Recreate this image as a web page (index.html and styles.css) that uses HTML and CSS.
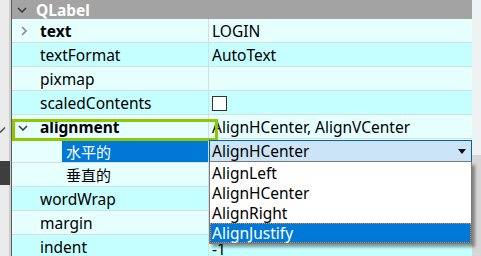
FILE: index.html
```html
<!DOCTYPE html>
<html lang="zh">
<head>
    <meta charset="UTF-8">
    <title>Property Editor - QLabel</title>
    <link rel="stylesheet" href="styles.css">
</head>
<body>
    <div class="screen">
        <div class="side">
            <svg class="side-mark" width="6" height="8" viewBox="0 0 6 8"><path d="M0 7.5 L5 2.5" stroke="#555" stroke-width="1.6" fill="none"/></svg>
            <div class="side-block"></div>
        </div>

        <div class="tree">
            <div class="group">
                <svg class="chev" width="10" height="6" viewBox="0 0 10 6"><path d="M1 1 L5 5 L9 1" stroke="#3c3c3c" stroke-width="1.6" fill="none"/></svg>
                <span>QLabel</span>
            </div>

            <div class="row light">
                <div class="name top">
                    <svg class="chev-r" width="6" height="10" viewBox="0 0 6 10"><path d="M1 1 L5 5 L1 9" stroke="#8a8a8a" stroke-width="1.6" fill="none"/></svg>
                    <b>text</b>
                </div>
                <div class="value">LOGIN</div>
            </div>
            <div class="row dark">
                <div class="name top">textFormat</div>
                <div class="value">AutoText</div>
            </div>
            <div class="row light">
                <div class="name top">pixmap</div>
                <div class="value"></div>
            </div>
            <div class="row dark">
                <div class="name top">scaledContents</div>
                <div class="value"><span class="check"></span></div>
            </div>
            <div class="row light">
                <div class="name top">
                    <svg class="chev-d" width="10" height="6" viewBox="0 0 10 6"><path d="M1 1 L5 5 L9 1" stroke="#3c3c3c" stroke-width="1.6" fill="none"/></svg>
                    <b>alignment</b>
                </div>
                <div class="value">AlignHCenter, AlignVCenter</div>
            </div>
            <div class="row light">
                <div class="name child"><span class="selected">水平的</span></div>
                <div class="value"></div>
            </div>
            <div class="row light">
                <div class="name child"><span class="plain">垂直的</span></div>
                <div class="value"></div>
            </div>
            <div class="row dark">
                <div class="name top">wordWrap</div>
                <div class="value"></div>
            </div>
            <div class="row light">
                <div class="name top">margin</div>
                <div class="value"></div>
            </div>
            <div class="row dark">
                <div class="name top">indent</div>
                <div class="value low">-1</div>
            </div>

            <!-- current item outline -->
            <div class="focus-ring"></div>

            <!-- open combo editor -->
            <div class="combo">
                <span>AlignHCenter</span>
                <svg width="8" height="5" viewBox="0 0 8 5"><path d="M0 0 H8 L4 5 Z" fill="#111"/></svg>
            </div>
            <ul class="popup">
                <li>AlignLeft</li>
                <li>AlignHCenter</li>
                <li>AlignRight</li>
                <li class="current">AlignJustify</li>
            </ul>
        </div>

        <div class="scroll">
            <div class="scroll-top"></div>
            <div class="scroll-rest"></div>
        </div>
    </div>
</body>
</html>
```

FILE: styles.css
```css
body {
    margin: 0;
    background-color: #f0f0f0;
    font-family: "Noto Sans", "Noto Sans CJK SC", sans-serif;
    font-size: 15.5px;
    color: #000;
}

.screen {
    display: flex;
    width: 481px;
    height: 256px;
    overflow: hidden;
}

/* left neighbour panel edge */
.side {
    width: 11px;
    flex-shrink: 0;
    display: flex;
    flex-direction: column;
    background: linear-gradient(to right, #ebebeb 0, #ebebeb 9px, #cdcdcd 9px);
    border-right: 1px solid #5e5e5e;
}

.side-mark {
    display: block;
    margin-top: 125px;
}

.side-block {
    width: 10px;
    height: 24px;
    margin-top: 28px;
    background-color: #3e3e3e;
}

/* property tree */
.tree {
    position: relative;
    width: 460px;
    flex-shrink: 0;
    background-color: #e6ffff;
}

.group {
    height: 19px;
    display: flex;
    align-items: center;
    background-color: #a3a3a3;
    color: #fff;
    font-weight: bold;
}

.group .chev {
    margin-left: 5px;
    margin-right: 9px;
}

.row {
    display: flex;
    height: 24px;
    box-sizing: border-box;
    border-bottom: 1px solid #d6dede;
}

.row.light {
    background-color: #e6ffff;
}

.row.dark {
    background-color: #c6ffff;
}

.name {
    width: 197px;
    flex-shrink: 0;
    box-sizing: border-box;
    border-right: 1px solid #d6dede;
    display: flex;
    align-items: center;
    padding-top: 1px;
    white-space: nowrap;
}

.name.top {
    padding-left: 28px;
    position: relative;
}

.name .chev-r {
    position: absolute;
    left: 9px;
    top: 7px;
}

.name .chev-d {
    position: absolute;
    left: 6px;
    top: 10px;
}

.name.child {
    padding-left: 50px;
    padding-top: 0;
    align-items: stretch;
}

.name.child span {
    flex: 1;
    display: flex;
    align-items: center;
    padding-left: 4px;
    font-size: 15px;
}

.name.child .selected {
    background-color: #0078d7;
    color: #fff;
    margin-top: 1px;
}

.value {
    flex: 1;
    display: flex;
    align-items: center;
    padding-left: 3px;
    padding-top: 1px;
    white-space: nowrap;
}

.value.low {
    line-height: 14px;
    padding-top: 5px;
}

.check {
    width: 15px;
    height: 15px;
    box-sizing: border-box;
    border: 1px solid #333;
    background-color: #fff;
}

.focus-ring {
    position: absolute;
    left: 0;
    top: 119px;
    width: 206px;
    height: 22px;
    box-sizing: border-box;
    border: 3px solid #8fc800;
    pointer-events: none;
}

.combo {
    position: absolute;
    left: 197px;
    top: 140px;
    width: 263px;
    height: 22px;
    box-sizing: border-box;
    border: 1px solid #0060b0;
    border-bottom-color: #7a7a7a;
    background-color: #cce4f7;
    display: flex;
    align-items: center;
    justify-content: space-between;
    padding: 0 5px 0 2px;
}

.popup {
    position: absolute;
    left: 197px;
    top: 162px;
    width: 263px;
    height: 82px;
    box-sizing: border-box;
    margin: 0;
    padding: 1px 0 0 0;
    list-style: none;
    background-color: #fff;
    border: 1px solid #7a7a7a;
    border-top: none;
    box-shadow: 3px 3px 3px rgba(0, 0, 0, 0.4);
}

.popup li {
    height: 20px;
    line-height: 20px;
    padding-left: 2px;
    box-sizing: border-box;
}

.popup li.current {
    background-color: #0078d7;
    color: #fff;
    border: 1px dotted #f08a24;
    padding-left: 1px;
    line-height: 18px;
}

.scroll {
    flex: 1;
    display: flex;
    flex-direction: column;
}

.scroll-top {
    height: 155px;
    background-color: #eef2f2;
}

.scroll-rest {
    flex: 1;
    background-color: #d6d6d6;
}
```
